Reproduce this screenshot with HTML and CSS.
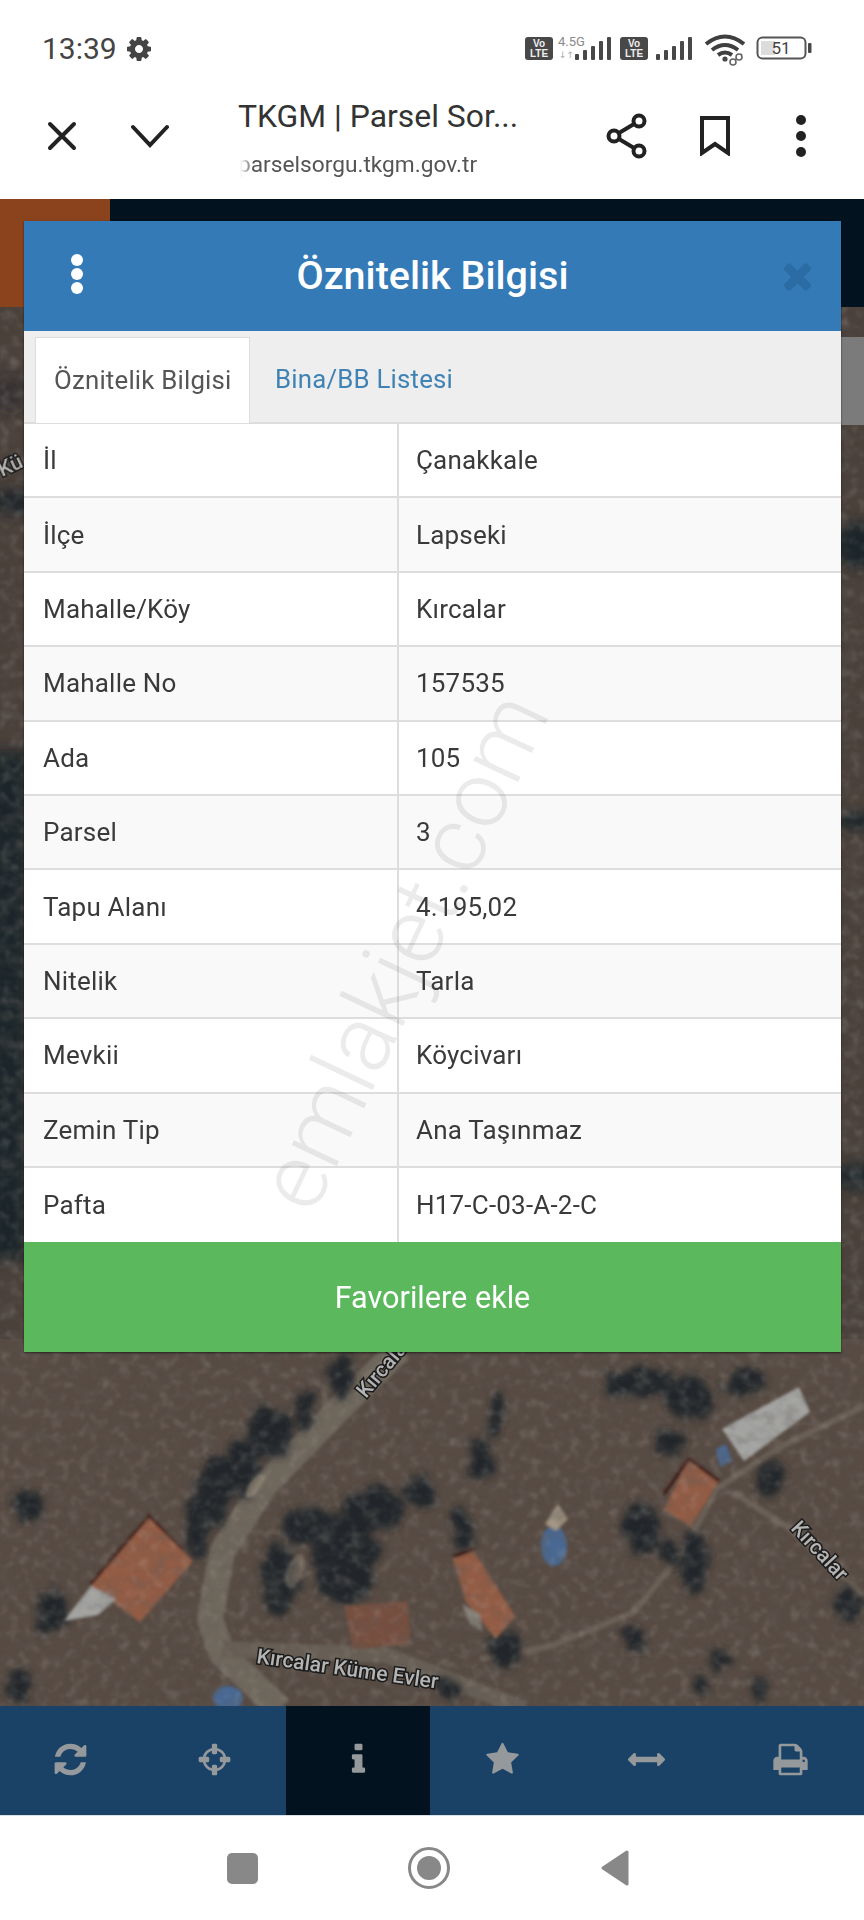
FILE: index.html
```html
<!DOCTYPE html>
<html lang="tr">
<head>
	<meta charset="UTF-8">
	<title>TKGM | Parsel Sorgu</title>
	<link rel="stylesheet" href="styles.css">
</head>
<body>
<div class="phone">

  <!-- status bar -->
  <div class="status">
    <div class="status-left">
      <span class="clock">13:39</span>
      <svg class="gear" viewBox="0 0 1792 1792"><path d="M1152 896q0-106-75-181t-181-75-181 75-75 181 75 181 181 75 181-75 75-181zm512-109v222q0 12-8 23t-20 13l-185 28q-19 54-39 91 35 50 107 138 10 12 10 25t-9 23q-27 37-99 108t-94 71q-12 0-26-9l-138-108q-44 23-91 38-16 136-29 186-7 28-36 28h-222q-14 0-24.5-8.5t-11.5-21.5l-28-184q-49-16-90-37l-141 107q-10 9-25 9-14 0-25-11-126-114-165-168-7-10-7-23 0-12 8-23 15-21 51-66.5t54-70.5q-27-50-41-99l-183-27q-13-2-21-12.5t-8-23.5v-222q0-12 8-23t19-13l186-28q14-46 39-92-40-57-107-138-10-12-10-24 0-10 9-23 26-36 98.5-107.5t94.5-71.5q13 0 26 10l138 107q44-23 91-38 16-136 29-186 7-28 36-28h222q14 0 24.5 8.5t11.5 21.5l28 184q49 16 90 37l142-107q9-9 24-9 13 0 25 10 129 119 165 170 7 8 7 22 0 12-8 23-15 21-51 66.5t-54 70.5q26 50 41 98l183 28q13 2 21 12.5t8 23.5z"/></svg>
    </div>
    <svg class="status-icons" viewBox="520 30 300 36">
      <rect x="525" y="37" width="28" height="23" rx="3" class="ic-dark"/>
      <text x="539" y="47" class="volte">Vo</text>
      <text x="539" y="57" class="volte">LTE</text>
      <text x="558" y="46" class="net">4.5G</text>
      <text x="559" y="58" class="net-arrows">↓↑</text>
      <g class="ic-dark">
        <rect x="575" y="54" width="4" height="6" rx="1"/>
        <rect x="583" y="50" width="4" height="10" rx="1"/>
        <rect x="591" y="46" width="4" height="14" rx="1"/>
        <rect x="599" y="41" width="4" height="19" rx="1"/>
        <rect x="607" y="37" width="4" height="23" rx="1"/>
      </g>
      <rect x="620" y="37" width="28" height="23" rx="3" class="ic-dark"/>
      <text x="634" y="47" class="volte">Vo</text>
      <text x="634" y="57" class="volte">LTE</text>
      <g class="ic-dark">
        <rect x="656" y="54" width="4" height="6" rx="1"/>
        <rect x="664" y="50" width="4" height="10" rx="1"/>
        <rect x="672" y="46" width="4" height="14" rx="1"/>
        <rect x="680" y="41" width="4" height="19" rx="1"/>
        <rect x="688" y="37" width="4" height="23" rx="1"/>
      </g>
      <g class="wifi">
        <path d="M706 44q19-15 38 0"/>
        <path d="M712 50q13-10 26 0"/>
        <path d="M718 55q7-5 14 0"/>
      </g>
      <circle cx="725" cy="59" r="2.6" class="ic-dark"/>
      <g class="link">
        <path d="M735 60l7-6"/>
        <circle cx="739" cy="57" r="3"/>
        <circle cx="733" cy="62" r="3"/>
      </g>
      <rect x="757.5" y="37.5" width="48" height="21" rx="5" class="batt"/>
      <rect x="761" y="41" width="14" height="14" class="batt-fill"/>
      <rect x="808" y="43" width="3.5" height="10" rx="1" class="ic-dark"/>
      <text x="781" y="54" class="batt-text">51</text>
    </svg>
  </div>

  <!-- browser toolbar -->
  <div class="toolbar">
    <svg class="tb-close" viewBox="0 0 30 30"><path d="M3 3l24 24M27 3L3 27"/></svg>
    <svg class="tb-chevron" viewBox="0 0 38 24"><path d="M2 3l17 18L36 3"/></svg>
    <div class="tb-title">
      <div class="page-name">TKGM | Parsel Sor...</div>
      <div class="page-url">parselsorgu.tkgm.gov.tr</div>
    </div>
    <svg class="tb-share" viewBox="0 0 42 46">
      <circle cx="33" cy="8" r="5.5"/><circle cx="8" cy="23" r="5.5"/><circle cx="33" cy="38" r="5.5"/>
      <path d="M13 20l15-9M13 26l15 9"/>
    </svg>
    <svg class="tb-mark" viewBox="0 0 32 40"><path d="M3 2h26v35L16 28 3 37z"/></svg>
    <div class="tb-dots"><i></i><i></i><i></i></div>
  </div>

  <!-- map area -->
  <div class="map">
    <svg class="map-img" viewBox="0 200 864 1507" preserveAspectRatio="none">
      <defs>
        <filter id="soft"><feGaussianBlur stdDeviation="1.6"/></filter>
        <filter id="softer"><feGaussianBlur stdDeviation="6"/></filter>
        <filter id="organic" x="-5%" y="-5%" width="110%" height="110%">
          <feTurbulence type="fractalNoise" baseFrequency="0.05" numOctaves="3" seed="4" result="n"/>
          <feDisplacementMap in="SourceGraphic" in2="n" scale="22" xChannelSelector="R" yChannelSelector="G"/>
          <feGaussianBlur stdDeviation="3.5"/>
        </filter>
        <filter id="grain" x="0" y="0" width="100%" height="100%">
          <feTurbulence type="fractalNoise" baseFrequency="0.06 0.09" numOctaves="3" seed="7"/>
          <feColorMatrix values="0 0 0 0 0.12  0 0 0 0 0.11  0 0 0 0 0.10  2.2 0 0 0 -1"/>
          <feGaussianBlur stdDeviation="0.8"/>
        </filter>
        <filter id="glow" x="0" y="0" width="100%" height="100%">
          <feTurbulence type="fractalNoise" baseFrequency="0.1" numOctaves="3" seed="21"/>
          <feColorMatrix values="0 0 0 0 0.62  0 0 0 0 0.58  0 0 0 0 0.54  2.4 0 0 0 -1.2"/>
          <feGaussianBlur stdDeviation="0.8"/>
        </filter>
      </defs>

      <rect x="0" y="200" width="864" height="1507" class="m-ground"/>
      <rect x="0" y="1340" width="864" height="367" class="m-field"/>
      <g filter="url(#softer)">
        <rect x="-10" y="752" width="36" height="510" class="m-shadow"/>
        <ellipse cx="14" cy="503" rx="22" ry="13" class="m-tree"/>
        <ellipse cx="10" cy="395" rx="18" ry="18" class="m-tree" opacity=".5"/>
        <ellipse cx="858" cy="546" rx="22" ry="24" class="m-shadow"/>
        <ellipse cx="858" cy="822" rx="22" ry="9" class="m-shadow"/>
        <ellipse cx="858" cy="1178" rx="22" ry="14" class="m-shadow"/>
      </g>

      <!-- roads -->
      <g filter="url(#soft)">
        <path class="m-road" d="M400 1350L342 1407 264 1487 222 1553 210 1620 222 1655 280 1710"/>
        <path class="m-road-b" d="M222 1650L386 1656 525 1710"/>
        <path class="m-path" d="M864 1407L782 1447 716 1490 683 1553 634 1613 551 1647 480 1660"/>
        <path class="m-path" d="M733 1493L790 1530 864 1597"/>
      </g>

      <!-- trees -->
      <g filter="url(#organic)" class="m-tree m-canopy">
        <ellipse cx="268" cy="1435" rx="20" ry="22"/>
        <ellipse cx="240" cy="1470" rx="14" ry="26"/>
        <ellipse cx="215" cy="1490" rx="14" ry="32"/>
        <ellipse cx="198" cy="1530" rx="10" ry="26"/>
        <ellipse cx="342" cy="1378" rx="8" ry="20"/>
        <ellipse cx="305" cy="1412" rx="8" ry="16"/>
        <ellipse cx="345" cy="1560" rx="30" ry="42"/>
        <ellipse cx="375" cy="1510" rx="26" ry="18"/>
        <ellipse cx="310" cy="1530" rx="22" ry="16"/>
        <ellipse cx="419" cy="1493" rx="14" ry="12"/>
        <ellipse cx="280" cy="1580" rx="14" ry="34"/>
        <ellipse cx="463" cy="1530" rx="9" ry="20"/>
        <ellipse cx="495" cy="1415" rx="6" ry="20"/>
        <ellipse cx="480" cy="1460" rx="8" ry="16"/>
        <ellipse cx="642" cy="1528" rx="15" ry="22"/>
        <ellipse cx="771" cy="1480" rx="11" ry="16"/>
        <ellipse cx="694" cy="1565" rx="10" ry="26"/>
        <ellipse cx="668" cy="1553" rx="6" ry="11"/>
        <ellipse cx="640" cy="1383" rx="30" ry="12"/>
        <ellipse cx="690" cy="1400" rx="22" ry="18"/>
        <ellipse cx="745" cy="1385" rx="20" ry="10"/>
        <ellipse cx="670" cy="1445" rx="14" ry="12"/>
        <ellipse cx="28" cy="1507" rx="14" ry="12"/>
        <ellipse cx="50" cy="1613" rx="11" ry="20"/>
        <ellipse cx="17" cy="1687" rx="11" ry="13"/>
        <ellipse cx="848" cy="1605" rx="10" ry="14"/>
        <ellipse cx="445" cy="1688" rx="10" ry="6"/>
        <ellipse cx="720" cy="1660" rx="5" ry="9"/>
        <ellipse cx="635" cy="1640" rx="6" ry="11"/>
        <ellipse cx="505" cy="1650" rx="16" ry="14"/>
        <ellipse cx="760" cy="1690" rx="5" ry="8"/>
        <ellipse cx="700" cy="1685" rx="5" ry="6"/>
      </g>

      <!-- houses -->
      <g filter="url(#soft)">
        <path class="m-edge" d="M89 1585L149 1515 183 1550 176 1560 146 1528 98 1588z"/>
        <path class="m-roof" d="M91 1587L149 1519 193 1562 140 1623z"/>
        <path class="m-white" d="M91 1587L116 1600 98 1616 64 1622z"/>
        <path class="m-roof" d="M453 1560L474 1552 515 1617 496 1640 466 1603z"/>
        <path class="m-edge2" d="M453 1558L474 1550"/>
        <path class="m-grey" d="M462 1605L480 1615 482 1632 470 1625z"/>
        <path class="m-roof" d="M689 1460L719 1482 691 1528 664 1510z"/>
        <path class="m-edge2" d="M664 1495L689 1460 719 1482"/>
        <path class="m-roof-dim" d="M344 1607L408 1602 410 1645 353 1650z"/>
        <path class="m-white" d="M799 1388L810 1413 744 1462 722 1430z"/>
        <path class="m-blue" d="M716 1450L726 1445 732 1462 720 1468z"/>
        <ellipse cx="554" cy="1547" rx="13" ry="20" class="m-blue"/>
        <path class="m-sand" d="M545 1525L558 1505 568 1520 556 1532z"/>
        <ellipse cx="228" cy="1699" rx="15" ry="12" class="m-blue"/>
        <ellipse cx="295" cy="1572" rx="8" ry="18" class="m-sand" opacity=".4" transform="rotate(20 295 1572)"/>
        <ellipse cx="255" cy="1487" rx="6" ry="14" class="m-sand" opacity=".6" transform="rotate(35 255 1487)"/>
      </g>
      <rect x="0" y="308" width="864" height="1399" filter="url(#grain)" opacity=".45"/>
      <rect x="0" y="308" width="864" height="1399" filter="url(#glow)" opacity=".2"/>

      <!-- top band of the site behind the dialog -->
      <rect x="0" y="200" width="864" height="108" class="m-band"/>
      <rect x="0" y="200" width="110" height="108" class="m-orange"/>
      <rect x="841" y="338" width="23" height="88" class="m-scroll"/>

      <!-- street names -->
      <text class="m-label" transform="translate(2 478) rotate(-25)">Kü</text>
      <text class="m-label" transform="translate(366 1400) rotate(-50)">Kırcalar</text>
      <text class="m-label" transform="translate(256 1664) rotate(8)">Kırcalar Küme Evler</text>
      <text class="m-label" transform="translate(790 1530) rotate(47)">Kırcalar</text>
    </svg>

    <!-- dialog -->
    <div class="dialog">
      <div class="dlg-head">
        <div class="dlg-dots"><i></i><i></i><i></i></div>
        <div class="dlg-title">Öznitelik Bilgisi</div>
        <svg class="dlg-close" viewBox="0 0 1792 1792"><path d="M1490 1322q0 40-28 68l-136 136q-28 28-68 28t-68-28l-294-294-294 294q-28 28-68 28t-68-28l-136-136q-28-28-28-68t28-68l294-294-294-294q-28-28-28-68t28-68l136-136q28-28 68-28t68 28l294 294 294-294q28-28 68-28t68 28l136 136q28 28 28 68t-28 68l-294 294 294 294q28 28 28 68z"/></svg>
      </div>
      <div class="tabs">
        <span class="tab current">Öznitelik Bilgisi</span>
        <span class="tab">Bina/BB Listesi</span>
      </div>
      <div class="attrs">
        <div class="row"><div>İl</div><div>Çanakkale</div></div>
        <div class="row"><div>İlçe</div><div>Lapseki</div></div>
        <div class="row"><div>Mahalle/Köy</div><div>Kırcalar</div></div>
        <div class="row"><div>Mahalle No</div><div>157535</div></div>
        <div class="row"><div>Ada</div><div>105</div></div>
        <div class="row"><div>Parsel</div><div>3</div></div>
        <div class="row"><div>Tapu Alanı</div><div>4.195,02</div></div>
        <div class="row"><div>Nitelik</div><div>Tarla</div></div>
        <div class="row"><div>Mevkii</div><div>Köycivarı</div></div>
        <div class="row"><div>Zemin Tip</div><div>Ana Taşınmaz</div></div>
        <div class="row"><div>Pafta</div><div>H17-C-03-A-2-C</div></div>
      </div>
      <div class="fav">Favorilere ekle</div>
      <div class="watermark">emlakjet.com</div>
    </div>
  </div>

  <!-- map toolbar -->
  <div class="mapnav">
    <div class="navitem"><svg class="i37" viewBox="0 0 1792 1792"><path d="M1639 1056q0 5-1 7-64 268-268 434.5t-478 166.5q-146 0-282.5-55t-243.5-157l-129 129q-19 19-45 19t-45-19-19-45v-448q0-26 19-45t45-19h448q26 0 45 19t19 45-19 45l-137 137q71 66 161 102t187 36q134 0 250-65t186-179q11-17 53-117 8-23 30-23h192q13 0 22.5 9.5t9.5 22.5zm25-800v448q0 26-19 45t-45 19h-448q-26 0-45-19t-19-45 19-45l138-138q-148-137-349-137-134 0-250 65t-186 179q-11 17-53 117-8 23-30 23h-199q-13 0-22.5-9.5t-9.5-22.5v-7q65-268 270-434.5t480-166.5q146 0 284 55.5t245 156.5l130-129q19-19 45-19t45 19 19 45z"/></svg></div>
    <div class="navitem"><svg class="i37" viewBox="0 0 1792 1792"><path d="M1325 1024h-109q-26 0-45-19t-19-45v-128q0-26 19-45t45-19h109q-32-108-112.5-188.5t-188.5-112.5v109q0 26-19 45t-45 19h-128q-26 0-45-19t-19-45v-109q-108 32-188.5 112.5t-112.5 188.5h109q26 0 45 19t19 45v128q0 26-19 45t-45 19h-109q32 108 112.5 188.5t188.5 112.5v-109q0-26 19-45t45-19h128q26 0 45 19t19 45v109q108-32 188.5-112.5t112.5-188.5zm339-192v128q0 26-19 45t-45 19h-143q-37 161-154.5 278.5t-278.5 154.5v143q0 26-19 45t-45 19h-128q-26 0-45-19t-19-45v-143q-161-37-278.5-154.5t-154.5-278.5h-143q-26 0-45-19t-19-45v-128q0-26 19-45t45-19h143q37-161 154.5-278.5t278.5-154.5v-143q0-26 19-45t45-19h128q26 0 45 19t19 45v143q161 37 278.5 154.5t154.5 278.5h143q26 0 45 19t19 45z"/></svg></div>
    <div class="navitem active"><svg class="i37" viewBox="0 0 1792 1792"><path d="M1216 1344v128q0 26-19 45t-45 19h-512q-26 0-45-19t-19-45v-128q0-26 19-45t45-19h64v-384h-64q-26 0-45-19t-19-45v-128q0-26 19-45t45-19h384q26 0 45 19t19 45v576h64q26 0 45 19t19 45zm-128-1152v192q0 26-19 45t-45 19h-256q-26 0-45-19t-19-45v-192q0-26 19-45t45-19h256q26 0 45 19t19 45z"/></svg></div>
    <div class="navitem"><svg class="i35" viewBox="0 0 1792 1792"><path d="M1728 647q0 22-26 48l-363 354 86 500q1 7 1 20 0 21-10.5 35.5t-30.5 14.5q-19 0-40-12l-449-236-449 236q-22 12-40 12-21 0-31.5-14.5t-10.5-35.5q0-6 2-20l86-500-364-354q-25-27-25-48 0-37 56-46l502-73 225-455q19-41 49-41t49 41l225 455 502 73q56 9 56 46z"/></svg></div>
    <div class="navitem"><svg class="i37" viewBox="0 0 1792 1792"><path d="M1792 896q0 26-19 45l-256 256q-19 19-45 19t-45-19-19-45v-128h-1024v128q0 26-19 45t-45 19-45-19l-256-256q-19-19-19-45t19-45l256-256q19-19 45-19t45 19 19 45v128h1024v-128q0-26 19-45t45-19 45 19l256 256q19 19 19 45z"/></svg></div>
    <div class="navitem"><svg class="i37" viewBox="0 0 1792 1792"><path d="M448 1536h896v-256h-896v256zm0-640h896v-384h-160q-40 0-68-28t-28-68v-160h-640v640zm1152 64q0-26-19-45t-45-19-45 19-19 45 19 45 45 19 45-19 19-45zm128 0v416q0 13-9.5 22.5t-22.5 9.5h-224v160q0 40-28 68t-68 28h-960q-40 0-68-28t-28-68v-160h-224q-13 0-22.5-9.5t-9.5-22.5v-416q0-79 56.5-135.5t135.5-56.5h64v-544q0-40 28-68t68-28h672q40 0 88 20t76 48l152 152q28 28 48 76t20 88v256h64q79 0 135.5 56.5t56.5 135.5z"/></svg></div>
  </div>

  <!-- android nav -->
  <div class="sysnav">
    <span class="sys-square"></span>
    <span class="sys-home"><i></i></span>
    <svg class="sys-back" viewBox="0 0 30 38"><path d="M27 3v32L3 19z"/></svg>
  </div>
</div>
</body>
</html>
```

FILE: styles.css
```css
html,body{margin:0;padding:0;}
body{background:#fff;font-family:Roboto,"Liberation Sans",sans-serif;}
.phone{width:864px;height:1920px;display:flex;flex-direction:column;overflow:hidden;}

/* status bar */
.status{height:72px;flex:none;display:flex;justify-content:space-between;align-items:flex-start;padding:0 44px 0 42px;box-sizing:border-box;position:relative;}
.status-left{display:flex;align-items:center;gap:8px;margin-top:32px;}
.clock{font-size:30px;line-height:34px;color:#444;}
.gear{width:28px;height:28px;fill:#444;}
.status-icons{position:absolute;left:520px;top:30px;width:300px;height:36px;}
.ic-dark{fill:#484848;}
.volte{font:700 10px "Liberation Sans",sans-serif;fill:#eee;text-anchor:middle;}
.net{font:13px Roboto,sans-serif;fill:#8a8a8a;}
.net-arrows{font:9px "DejaVu Sans",sans-serif;fill:#aaa;}
.wifi path{fill:none;stroke:#3f3f3f;stroke-width:4;}
.link{fill:#fff;stroke:#666;stroke-width:1.6;}
.batt{fill:none;stroke:#555;stroke-width:2;}
.batt-fill{fill:#dcdcdc;}
.batt-text{font:17px Roboto,sans-serif;fill:#444;text-anchor:middle;}

/* toolbar */
.toolbar{height:127px;flex:none;display:flex;align-items:center;position:relative;}
.toolbar svg{flex:none;}
.toolbar path{fill:none;stroke:#222;stroke-width:4;stroke-linecap:round;}
.tb-close{width:30px;height:30px;margin-left:47px;}
.tb-chevron{width:38px;height:24px;margin-left:54px;}
.tb-title{width:300px;margin-left:69px;margin-top:10px;display:flex;flex-direction:column;gap:9px;}
.page-name{font-size:31.9px;line-height:40px;color:#333;white-space:nowrap;}
.page-url{font-size:22.7px;line-height:40px;color:#555;white-space:nowrap;-webkit-mask-image:linear-gradient(90deg,transparent 2px,#000 16px);mask-image:linear-gradient(90deg,transparent 2px,#000 16px);}
.tb-share{width:42px;height:46px;margin-left:68px;}
.toolbar .tb-share circle{fill:none;stroke:#222;stroke-width:4;}
.tb-mark{width:32px;height:40px;margin-left:51px;}
.tb-dots{margin-left:65px;display:flex;flex-direction:column;gap:6px;}
.tb-dots i{display:block;width:10px;height:10px;border-radius:50%;background:#222;}

/* map */
.map{height:1507px;flex:none;position:relative;overflow:hidden;}
.map-img{position:absolute;left:0;top:0;width:864px;height:100%;display:block;}
.m-ground{fill:#4b413b;}
.m-field{fill:#574b43;}
.m-shadow{fill:#1f282c;}
.m-tree{fill:#20262b;}
.m-canopy{stroke:#20262b;stroke-width:7;}
.m-road{fill:none;stroke:#6f675d;stroke-width:26;stroke-linejoin:round;}
.m-road-b{fill:none;stroke:#675e55;stroke-width:16;}
.m-path{fill:none;stroke:#6c6056;stroke-width:6;}
.m-roof{fill:#925c45;}
.m-roof-dim{fill:#76503f;}
.m-edge{fill:#3a1814;}
.m-edge2{fill:none;stroke:#3a1814;stroke-width:3;}
.m-white{fill:#a3a3a1;}
.m-grey{fill:#857f78;}
.m-blue{fill:#4a6892;}
.m-sand{fill:#a0927f;}
.m-band{fill:#03121f;}
.m-orange{fill:#8a431d;}
.m-scroll{fill:#7b7b7b;}
.m-label{font:500 21px Roboto,sans-serif;fill:#b4b4b4;stroke:#1c1c1c;stroke-width:3px;paint-order:stroke;}

/* dialog */
.dialog{position:absolute;left:24px;top:22px;width:817px;background:#fff;box-shadow:0 1px 2px rgba(0,0,0,.6);}
.dlg-head{height:110px;background:#337ab7;position:relative;display:flex;align-items:center;justify-content:center;}
.dlg-title{font-size:39.5px;font-weight:500;color:#fff;margin-top:-2px;}
.dlg-dots{position:absolute;left:47px;top:33px;display:flex;flex-direction:column;gap:2px;}
.dlg-dots i{display:block;width:12px;height:12px;border-radius:50%;background:#fff;}
.dlg-close{position:absolute;left:753px;top:34px;width:41px;height:41px;fill:#2a6ca3;}
.tabs{height:93px;box-sizing:border-box;background:#eee;border-bottom:2px solid #ddd;padding:6px 0 0 11px;display:flex;}
.tab{padding:0 16px 0 20px;line-height:85px;font-size:25.8px;letter-spacing:.2px;color:#3f83b5;}
.tab.current{background:#fff;color:#555;border:1px solid #ddd;border-bottom:0;height:86px;width:215px;box-sizing:border-box;padding:0 0 0 18px;white-space:nowrap;margin-right:5px;}
.attrs{position:relative;}
.row{display:grid;grid-template-columns:375px 1fr;height:74.4px;box-sizing:border-box;font-size:26px;color:#3a3a3a;letter-spacing:.2px;border-bottom:2px solid #ddd;}
.row:last-child{border-bottom:0;}
.row:nth-child(even){background:#f9f9f9;}
.row>div{display:flex;align-items:center;padding-left:17px;}
.row>div:first-child{border-right:2px solid #ddd;box-sizing:border-box;padding-left:19px;}
.fav{height:110px;background:#5cb85c;color:#fff;font-size:30.6px;display:flex;align-items:center;justify-content:center;}
.watermark{position:absolute;left:379px;top:730px;width:0;height:0;display:flex;align-items:center;justify-content:center;white-space:nowrap;transform:rotate(-64.7deg);font-size:94px;font-weight:300;color:rgba(90,90,90,.12);pointer-events:none;}

/* map toolbar */
.mapnav{height:109px;flex:none;background:#1a4266;display:grid;grid-template-columns:repeat(6,144px);margin-left:-2px;box-shadow:0 -1px 0 #4a4a4a;}
.navitem{display:flex;align-items:center;justify-content:center;padding-bottom:2px;box-sizing:border-box;}
.navitem.active{background:#03121f;}
.i37{width:37px;height:37px;fill:#95999c;}
.i35{width:35px;height:35px;fill:#95999c;}

/* android nav */
.sysnav{height:105px;flex:none;display:flex;align-items:center;position:relative;padding-left:227px;background:#fff;border-top:1px solid #d8e0e8;box-sizing:border-box;}
.sys-square{width:31px;height:31px;border-radius:5px;background:#888;}
.sys-home{width:42px;height:42px;box-sizing:border-box;border:3px solid #888;border-radius:50%;display:flex;align-items:center;justify-content:center;margin-left:150px;}
.sys-home i{display:block;width:24px;height:24px;border-radius:50%;background:#888;}
.sys-back{width:30px;height:38px;margin-left:150px;fill:#888;stroke:#888;stroke-width:3;stroke-linejoin:round;}
```
